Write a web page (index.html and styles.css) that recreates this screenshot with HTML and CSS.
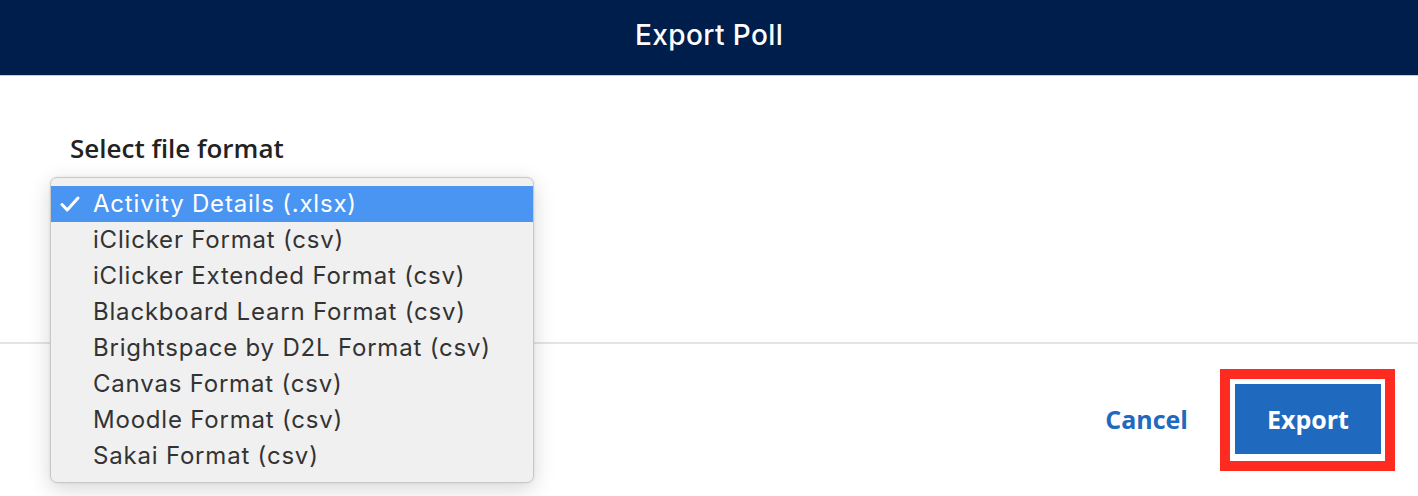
FILE: index.html
```html
<!DOCTYPE html>
<html lang="en">
<head>
<meta charset="utf-8">
<title>Export Poll</title>
<link rel="stylesheet" href="styles.css">
</head>
<body>
<div class="modal">
  <header class="header"><h1 class="title">Export Poll</h1></header>
  <main class="content">
    <div class="label">Select file format</div>
    <ul class="menu">
      <li class="item selected"><svg class="check" viewBox="0 0 20 16" width="20" height="16"><path d="M2 8.5 L7.2 14 L18 2" fill="none" stroke="#fff" stroke-width="3" stroke-linecap="round" stroke-linejoin="round"/></svg>Activity Details (.xlsx)</li>
      <li class="item">iClicker Format (csv)</li>
      <li class="item">iClicker Extended Format (csv)</li>
      <li class="item">Blackboard Learn Format (csv)</li>
      <li class="item">Brightspace by D2L Format (csv)</li>
      <li class="item">Canvas Format (csv)</li>
      <li class="item">Moodle Format (csv)</li>
      <li class="item">Sakai Format (csv)</li>
    </ul>
  </main>
  <footer class="footer">
    <a class="cancel" href="#">Cancel</a>
    <div class="highlight"><button class="export">Export</button></div>
  </footer>
</div>
</body>
</html>
```

FILE: styles.css
```css
* { box-sizing: border-box; }
html, body { margin: 0; padding: 0; background: #ffffff; }
body { width: 1418px; height: 496px; overflow: hidden; font-family: "Open Sans", sans-serif; }
.modal { position: relative; height: 496px; display: flex; flex-direction: column; }
.header {
  height: 76px; background: #001e4c; display: flex; align-items: center; justify-content: center;
  border-bottom: 1px solid #c9ccd3;
}
.title { margin: 0; color: #ffffff; font-family: "Inter", sans-serif; font-weight: 500; font-size: 28px; letter-spacing: 0.4px; padding-bottom: 6px; }
.content { position: relative; height: 268px; padding: 53px 70px 0; border-bottom: 2px solid #e4e4e4; }
.label { font-size: 26px; font-weight: 600; color: #222222; line-height: 38px; }
.menu {
  position: absolute; left: 50px; top: 101px; width: 484px; margin: 0; padding: 8px 0;
  list-style: none; background: #f0f0f0; border: 1px solid #c8c8c8; border-radius: 7px;
  box-shadow: 0 6px 22px rgba(0,0,0,0.16), 0 0 3px rgba(0,0,0,0.08);
  font-family: "Inter", "Roboto", sans-serif; font-size: 24px; letter-spacing: 0.8px; color: #333333; z-index: 2;
}
.item { height: 36px; line-height: 36px; padding-left: 42px; position: relative; white-space: nowrap; }
.item.selected { background: #4b95f2; color: #ffffff; }
.check { position: absolute; left: 9px; top: 10px; }
.footer { flex: 1; display: flex; align-items: flex-start; justify-content: flex-end; padding: 25px 23px 0 0; }
.cancel { color: #1f69be; font-weight: 700; font-size: 25px; text-decoration: none; margin-right: 32px; margin-top: 33px; }
.highlight { border: 10px solid #ff2a20; padding: 5px 4px 7px 5px; background: #fff; }
.export {
  display: block; width: 146px; height: 70px; border: 0; background: #1f69be; color: #fff;
  font-family: "Open Sans", sans-serif; font-weight: 700; font-size: 25px; padding: 0;
}
```
